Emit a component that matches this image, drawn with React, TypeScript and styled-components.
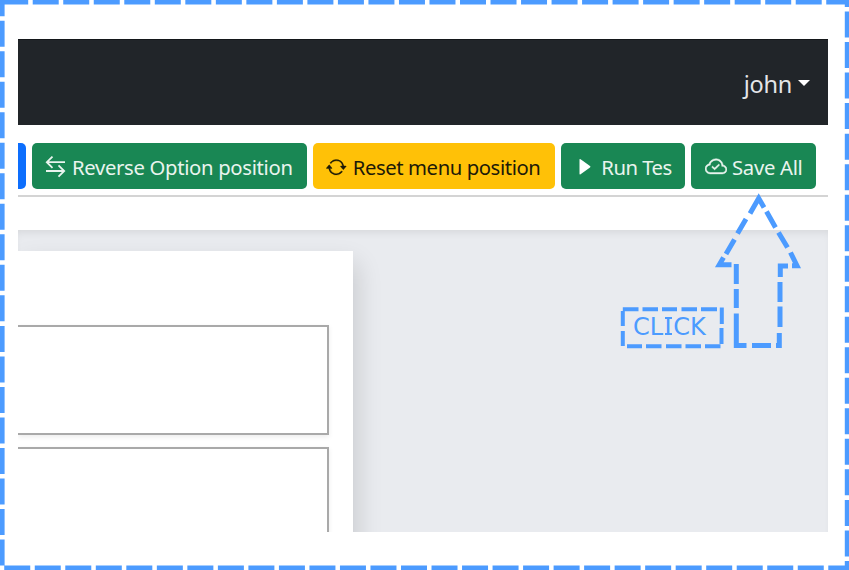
import React from "react";
import styled, { createGlobalStyle } from "styled-components";
import { BsArrowRepeat, BsCloudCheck } from "react-icons/bs";

const GlobalStyle = createGlobalStyle`
  body { margin: 0; background: #fff; overflow: hidden; }
  * { box-sizing: border-box; }
`;

const Frame = styled.div`
  position: relative;
  width: 849px;
  height: 570px;
  padding: 39px 21px 38px 18px;
  background: #fff;
`;

const Viewport = styled.main`
  display: flex;
  flex-direction: column;
  width: 810px;
  height: 493px;
  overflow: hidden;
  font-family: "Noto Sans", sans-serif;
`;

const Header = styled.header`
  display: flex;
  flex: none;
  align-items: center;
  justify-content: flex-end;
  gap: 6px;
  height: 86px;
  padding: 3px 18px 0 0;
  background: #212529;
  border-top: 1px solid #14171a;
  color: #e4e6e8;
  font-size: 23.5px;
  letter-spacing: -0.3px;
`;

const Caret = styled.i`
  border: 6px solid transparent;
  border-top-color: #fff;
  border-bottom: 0;
  margin-top: -3px;
`;

const Toolbar = styled.nav`
  display: flex;
  flex: none;
  gap: 6px;
  height: 72px;
  padding-top: 18px;
  border-bottom: 2px solid #d4d4d4;
`;

const Button = styled.button<{ $w: number; $tone: string; $ink?: string; $gap?: number; $track?: number }>`
  display: flex;
  flex: none;
  align-items: center;
  gap: ${(p) => p.$gap ?? 6}px;
  width: ${(p) => p.$w}px;
  height: 46.4px;
  padding: 2px 0 0 13.5px;
  border: 0;
  border-radius: 5px;
  background: ${(p) => p.$tone};
  color: ${(p) => p.$ink ?? "#e9f4ee"};
  font: 20.3px "Noto Sans", sans-serif;
  letter-spacing: ${(p) => p.$track ?? 0}px;
  white-space: nowrap;
  svg { flex: none; }
`;

const ClippedButton = styled(Button)`
  padding: 0;
  border-radius: 0 5px 5px 0;
`;

const Strip = styled.div`
  flex: none;
  height: 33px;
  background: #fff;
`;

const Workspace = styled.section`
  flex: 1;
  padding-top: 21px;
  background: #e9ebef;
  box-shadow: inset 0 6px 8px -4px rgba(0, 0, 0, 0.09);
`;

const Panel = styled.div`
  display: flex;
  flex-direction: column;
  gap: 12px;
  width: 335px;
  height: 320px;
  padding: 74px 24px 0 0;
  background: #fff;
  box-shadow: 4px 12px 24px rgba(0, 0, 0, 0.14);
`;

const Slot = styled.div`
  flex: none;
  height: 110px;
  border: 2px solid #a9a9a9;
  border-left: 0;
  background: #fff;
  box-shadow: 0 2px 5px rgba(0, 0, 0, 0.08);
`;

const Overlay = styled.svg`
  position: absolute;
  inset: 0;
  pointer-events: none;
`;

const ClickLabel = styled.span`
  position: absolute;
  left: 633px;
  top: 313px;
  display: flex;
  color: #4c9bff;
  font: 24px/28px "DejaVu Sans", sans-serif;
`;

const SerifI = styled.span`
  width: 10px;
  height: 28px;
  text-align: center;
  background:
    linear-gradient(#4c9bff, #4c9bff) 1.5px 4px / 7px 2px no-repeat,
    linear-gradient(#4c9bff, #4c9bff) 1.5px 20px / 7px 2px no-repeat;
`;

const ReverseIcon = () => (
  <svg width="21" height="22" viewBox="0 0 21 22" fill="none" stroke="currentColor" strokeWidth="1.8">
    <path d="M20 6.2H2M7.5 0.6 1.8 6.2 7.5 11.8M1 15H19M13.5 9.4 19.2 15 13.5 20.6" />
  </svg>
);

const PlayIcon = () => (
  <svg width="21" height="20" viewBox="0 0 21 20" fill="#fff">
    <path d="M5.5 2.6Q5.5 1.4 6.6 2.2L16 8.9Q17 9.7 16 10.5L6.6 17.2Q5.5 18 5.5 16.8Z" />
  </svg>
);

export default function App() {
  return (
    <>
      <GlobalStyle />
      <Frame>
        <Viewport>
          <Header>
            <span>john</span>
            <Caret />
          </Header>
          <Toolbar>
            <ClippedButton $w={7.5} $tone="#0d6efd" aria-label="More" />
            <Button $w={275.3} $tone="#198754" $track={-0.33}><ReverseIcon />Reverse Option position</Button>
            <Button $w={242} $tone="#ffc107" $ink="#1d1a08" $track={-0.42}><BsArrowRepeat size={20.5} strokeWidth={0.3} />Reset menu position</Button>
            <Button $w={124.7} $tone="#198754" $track={-0.5}><PlayIcon />Run Tes</Button>
            <Button $w={125} $tone="#198754" $gap={5} $track={-0.3}><BsCloudCheck size={22} strokeWidth={0.35} />Save All</Button>
          </Toolbar>
          <Strip />
          <Workspace>
            <Panel>
              <Slot />
              <Slot />
            </Panel>
          </Workspace>
        </Viewport>
        <Overlay width="849" height="570" viewBox="0 0 849 570" fill="none" stroke="#4c9bff">
          <path d="M2.2 2H847.2V568H2.2Z" strokeWidth="4.8" strokeDasharray="26 4.52" />
          <g strokeWidth="5">
            <path d="M750 213.5 758.7 198.2 764 207.5M746 219 737.5 233.5M734.5 239.5 726 254M723.5 257.5 719.3 264.7H731.5M766.5 211.5 775.5 227.5M778.5 232.5 787.5 247.5M790.5 252.5 797 265.7H792M736.3 264V284M736.3 289V308M736.3 313.5V345.5H746.5M752 345.5H771M776 345.5H779.3V333M780 327V306.5M780 302V282M780.3 277V266H788" />
            <path strokeWidth="4" d="M622.8 309.3H638.5M642.5 309.3H658M662 309.3H677M681.5 309.3H697M701 309.3H717M721.8 307.5V324M721.5 328V344M720.5 346.2H705M701 346.2H685.5M681.5 346.2H666M661.5 346.2H646M642 346.2H627M622.8 346V331M622.8 326V311" />
          </g>
        </Overlay>
        <ClickLabel>CL<SerifI>I</SerifI>CK</ClickLabel>
      </Frame>
    </>
  );
}
